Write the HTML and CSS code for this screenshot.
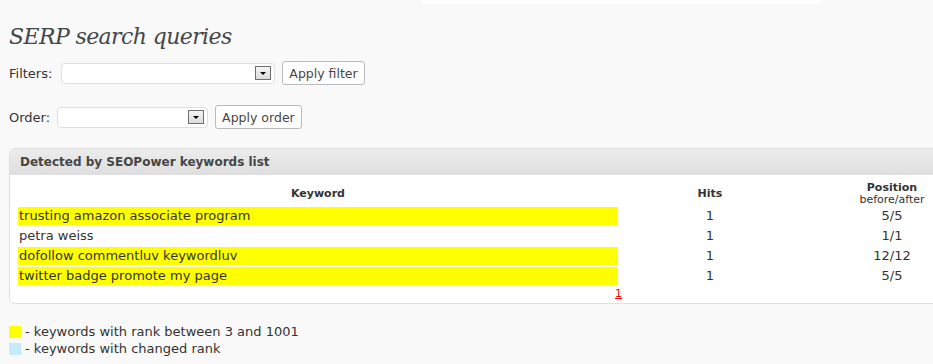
FILE: index.html
```html
<!DOCTYPE html>
<html lang="en">
<head>
    <meta charset="UTF-8">
    <title>SERP search queries</title>
    <link rel="stylesheet" href="styles.css">
</head>
<body>
    <div class="top-strip"></div>

    <div class="wrap">
        <h2 class="page-title">SERP search queries</h2>

        <form class="filter-row filters">
            <label>Filters:</label>
            <span class="select-box filter-select"><span class="select-arrow"></span></span>
            <button type="button" class="btn">Apply filter</button>
        </form>

        <form class="filter-row order">
            <label>Order:</label>
            <span class="select-box order-select"><span class="select-arrow"></span></span>
            <button type="button" class="btn">Apply order</button>
        </form>

        <div class="postbox">
            <h3 class="postbox-title">Detected by SEOPower keywords list</h3>
            <div class="inside">
                <table class="kw-table">
                    <thead>
                        <tr>
                            <th class="col-keyword">Keyword</th>
                            <th class="col-hits">Hits</th>
                            <th class="col-pos"><span class="pos-title">Position</span><span class="sub">before/after</span></th>
                        </tr>
                    </thead>
                    <tbody>
                        <tr>
                            <td class="kw ranked">trusting amazon associate program</td>
                            <td class="num">1</td>
                            <td class="num">5/5</td>
                        </tr>
                        <tr>
                            <td class="kw">petra weiss</td>
                            <td class="num">1</td>
                            <td class="num">1/1</td>
                        </tr>
                        <tr>
                            <td class="kw ranked">dofollow commentluv keywordluv</td>
                            <td class="num">1</td>
                            <td class="num">12/12</td>
                        </tr>
                        <tr>
                            <td class="kw ranked">twitter badge promote my page</td>
                            <td class="num">1</td>
                            <td class="num">5/5</td>
                        </tr>
                    </tbody>
                </table>
                <div class="pager"><a href="#">1</a></div>
            </div>
        </div>

        <div class="legend">
            <div class="legend-item"><span class="swatch yellow"></span> - keywords with rank between 3 and 1001</div>
            <div class="legend-item"><span class="swatch blue"></span> - keywords with changed rank</div>
        </div>
    </div>
</body>
</html>
```

FILE: styles.css
```css
html, body {
    margin: 0;
    padding: 0;
    overflow: hidden;
}
body {
    background-color: #f9f9f9;
    font-family: "DejaVu Sans", Verdana, sans-serif;
    font-size: 13px;
    color: #333;
    width: 933px;
    height: 364px;
}

.top-strip {
    margin-left: 422px;
    width: 400px;
    height: 4px;
    background-color: #fff;
}

.wrap {
    padding-left: 9px;
}

.page-title {
    font-family: "DejaVu Serif", Georgia, serif;
    font-style: italic;
    font-weight: normal;
    font-size: 22px;
    color: #464646;
    margin: 17px 0 0 0;
    line-height: 32px;
    letter-spacing: -0.6px;
}

/* Filter and order forms */
.filter-row {
    display: flex;
    align-items: center;
    height: 24px;
}
.filter-row label {
    margin-right: 7px;
}
.filters {
    margin-top: 8px;
}
.filters label {
    margin-right: 9px;
}
.order {
    margin-top: 20px;
}

.select-box {
    display: inline-flex;
    justify-content: flex-end;
    align-items: center;
    background-color: #fff;
    border: 1px solid #dfdfdf;
    border-radius: 4px;
    box-sizing: border-box;
    padding-right: 3px;
    margin-right: 7px;
}
.filter-select {
    width: 214px;
    height: 21px;
}
.order-select {
    width: 151px;
    height: 21px;
}
.select-arrow {
    width: 16px;
    height: 14px;
    box-sizing: border-box;
    border: 1px solid #6f6f6f;
    background: linear-gradient(#f4f4f4, #dcdcdc);
    position: relative;
}
.select-arrow::after {
    content: "";
    position: absolute;
    left: 4px;
    top: 5px;
    border-left: 3px solid transparent;
    border-right: 3px solid transparent;
    border-top: 3px solid #000;
}

.btn {
    font-family: "DejaVu Sans", Verdana, sans-serif;
    font-size: 12.5px;
    color: #464646;
    background-color: #fff;
    border: 1px solid #bbb;
    border-radius: 3px;
    height: 24px;
    padding: 0 6px;
    cursor: pointer;
}

/* Panel */
.postbox {
    margin-top: 19px;
    width: 990px;
    background-color: #fff;
    border: 1px solid #dfdfdf;
    border-radius: 6px;
    overflow: hidden;
}
.postbox-title {
    margin: 0;
    height: 25px;
    line-height: 26px;
    padding-left: 10px;
    font-size: 12px;
    font-weight: bold;
    color: #464646;
    background: linear-gradient(#ececec, #dfdfdf);
    border-bottom: 1px solid #dfdfdf;
}
.inside {
    padding: 5px 0 2px 0;
}

.kw-table {
    border-collapse: separate;
    border-spacing: 8px 2px;
}
.kw-table th {
    font-size: 11px;
    font-weight: bold;
    color: #333;
    vertical-align: middle;
    line-height: 12px;
    padding: 0;
}
.pos-title,
.kw-table .sub {
    display: block;
    height: 11px;
    line-height: 11px;
}
.kw-table .sub {
    font-weight: normal;
    margin-top: 1px;
}
.col-keyword {
    width: 600px;
}
.col-hits {
    width: 168px;
}
.col-pos {
    width: 180px;
}
.kw-table td {
    height: 18px;
    padding: 0;
    line-height: 18px;
    color: #333;
}
.kw-table td.kw {
    padding-left: 1px;
}
.kw-table td.num {
    text-align: center;
}
.ranked {
    background-color: #ffff00;
}

.pager {
    width: 612px;
    text-align: right;
    font-size: 11px;
    line-height: 14px;
}
.pager a {
    color: #f00;
}

/* Legend */
.legend {
    margin-top: 19px;
}
.legend-item {
    display: flex;
    align-items: center;
    height: 17px;
    gap: 4px;
}
.swatch {
    display: inline-block;
    width: 12px;
    height: 12px;
}
.swatch.yellow {
    background-color: #ffff00;
}
.swatch.blue {
    background-color: #c6ebfd;
}
```
